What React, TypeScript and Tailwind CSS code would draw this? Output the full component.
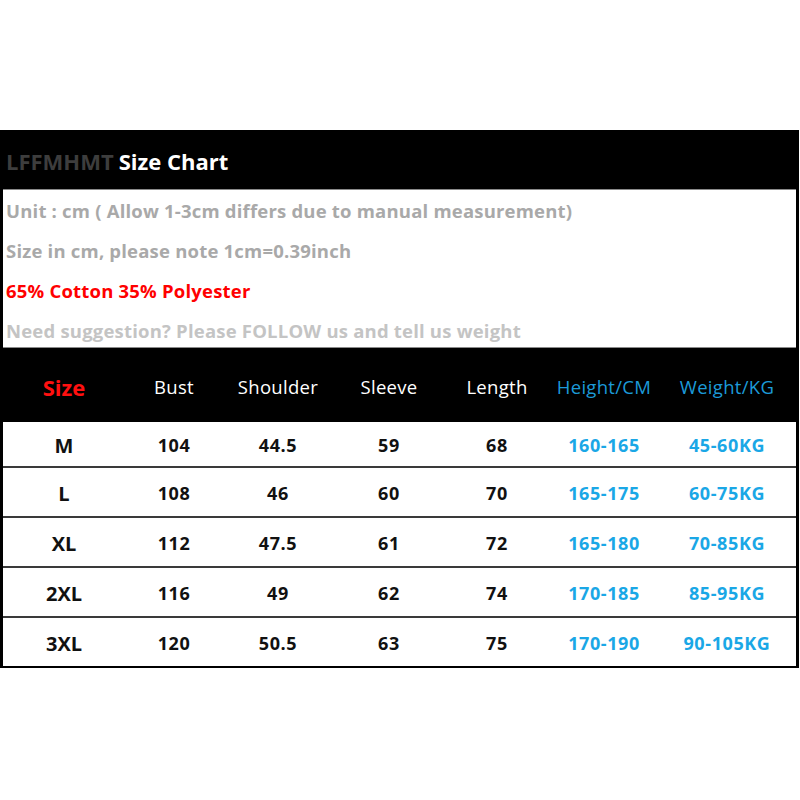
import React from 'react';

interface SizeRow {
  size: string;
  bust: string;
  shoulder: string;
  sleeve: string;
  length: string;
  height: string;
  weight: string;
}

const rows: SizeRow[] = [
  { size: 'M', bust: '104', shoulder: '44.5', sleeve: '59', length: '68', height: '160-165', weight: '45-60KG' },
  { size: 'L', bust: '108', shoulder: '46', sleeve: '60', length: '70', height: '165-175', weight: '60-75KG' },
  { size: 'XL', bust: '112', shoulder: '47.5', sleeve: '61', length: '72', height: '165-180', weight: '70-85KG' },
  { size: '2XL', bust: '116', shoulder: '49', sleeve: '62', length: '74', height: '170-185', weight: '85-95KG' },
  { size: '3XL', bust: '120', shoulder: '50.5', sleeve: '63', length: '75', height: '170-190', weight: '90-105KG' },
];

const cols = 'grid grid-cols-[122px_98px_110px_112px_104px_110px_136px]';

const App: React.FC = () => {
  return (
    <div className="w-[800px] h-[800px] bg-white pt-[130px] font-['Open_Sans','Liberation_Sans',sans-serif]">
      <div className="w-[799px] border-l-[3px] border-r-[3px] border-b-2 border-black">
        {/* Title bar */}
        <div className="h-[59px] bg-black flex items-center pl-[3px] pt-[3px] text-[22px] font-bold">
          <span className="text-[#3d3d3d]">LFFMHMT</span>
          <span className="text-white ml-[5px]">Size Chart</span>
        </div>

        {/* Notes */}
        <div className="h-[159px] bg-white border-y border-[#8a8a8a] flex flex-col pl-[3px] text-[18.5px] font-bold tracking-[0.2px]">
          <div className="h-10 shrink-0 flex items-center pt-[2px] text-[#a9a9a9]">Unit : cm ( Allow 1-3cm differs due to manual measurement)</div>
          <div className="h-10 shrink-0 flex items-center pt-[2px] text-[#a9a9a9]">Size in cm, please note 1cm=0.39inch</div>
          <div className="h-10 shrink-0 flex items-center pt-[2px] text-[#ff0000]">65% Cotton 35% Polyester</div>
          <div className="h-10 shrink-0 flex items-center pt-[2px] text-[#c4c4c4]">Need suggestion? Please FOLLOW us and tell us weight</div>
        </div>

        {/* Column headings */}
        <div className={`${cols} h-[74px] bg-black items-center pt-[4px] text-center text-[18.5px] tracking-[0.3px] text-white`}>
          <div className="text-[#ff1010] font-bold text-[22px] tracking-normal">Size</div>
          <div>Bust</div>
          <div>Shoulder</div>
          <div>Sleeve</div>
          <div>Length</div>
          <div className="text-[#1c9ad8]">Height/CM</div>
          <div className="text-[#1c9ad8]">Weight/KG</div>
        </div>

        {/* Rows */}
        {rows.map((row, i) => (
          <div
            key={row.size}
            className={`${cols} items-center pt-[3px] text-center font-bold text-[18px] tracking-[0.6px] text-[#111] ${
              i === 0 ? 'h-[44px]' : 'h-[50px] border-t-2 border-[#3a3a3a]'
            }`}
          >
            <div className="text-[20px] tracking-normal">{row.size}</div>
            <div>{row.bust}</div>
            <div>{row.shoulder}</div>
            <div>{row.sleeve}</div>
            <div>{row.length}</div>
            <div className="text-[#1aa7e6]">{row.height}</div>
            <div className="text-[#1aa7e6]">{row.weight}</div>
          </div>
        ))}
      </div>
    </div>
  );
};

export default App;
